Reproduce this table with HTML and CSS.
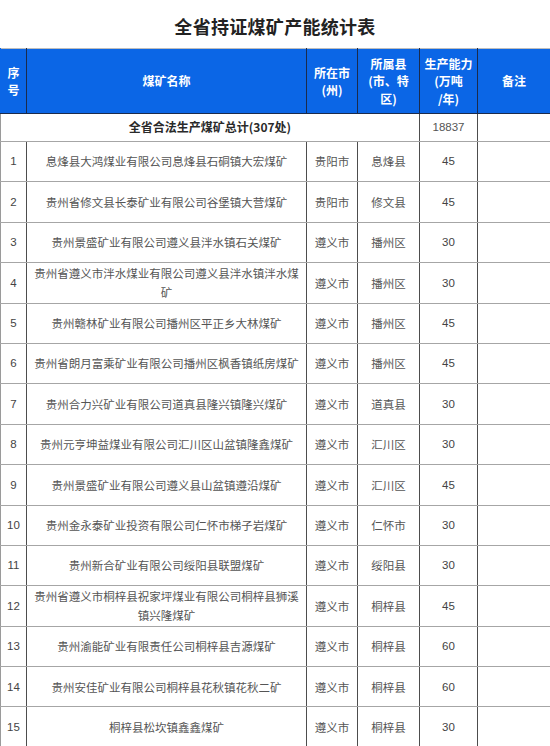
FILE: index.html
```html
<!DOCTYPE html>
<html lang="zh-CN">
<head>
<meta charset="utf-8">
<title>全省持证煤矿产能统计表</title>
<link rel="stylesheet" href="styles.css">
</head>
<body>
<h1 class="title">全省持证煤矿产能统计表</h1>
<table class="sheet">
<colgroup>
<col class="c-no"><col class="c-name"><col class="c-city"><col class="c-county"><col class="c-cap"><col class="c-note">
</colgroup>
<thead>
<tr class="head">
<th>序<br>号</th>
<th>煤矿名称</th>
<th>所在市<br>(州)</th>
<th>所属县<br>(市、特<br>区)</th>
<th>生产能力<br>(万吨<br>/年)</th>
<th>备注</th>
</tr>
</thead>
<tbody>
<tr class="total">
<td colspan="4" class="total-name">全省合法生产煤矿总计(307处)</td>
<td class="num">18837</td>
<td></td>
</tr>
<tr><td class="num">1</td><td class="name">息烽县大鸿煤业有限公司息烽县石硐镇大宏煤矿</td><td>贵阳市</td><td>息烽县</td><td class="num">45</td><td></td></tr>
<tr><td class="num">2</td><td class="name">贵州省修文县长泰矿业有限公司谷堡镇大营煤矿</td><td>贵阳市</td><td>修文县</td><td class="num">45</td><td></td></tr>
<tr><td class="num">3</td><td class="name">贵州景盛矿业有限公司遵义县泮水镇石关煤矿</td><td>遵义市</td><td>播州区</td><td class="num">30</td><td></td></tr>
<tr><td class="num">4</td><td class="name">贵州省遵义市泮水煤业有限公司遵义县泮水镇泮水煤矿</td><td>遵义市</td><td>播州区</td><td class="num">30</td><td></td></tr>
<tr><td class="num">5</td><td class="name">贵州赣林矿业有限公司播州区平正乡大林煤矿</td><td>遵义市</td><td>播州区</td><td class="num">45</td><td></td></tr>
<tr><td class="num">6</td><td class="name">贵州省朗月富乘矿业有限公司播州区枫香镇纸房煤矿</td><td>遵义市</td><td>播州区</td><td class="num">45</td><td></td></tr>
<tr><td class="num">7</td><td class="name">贵州合力兴矿业有限公司道真县隆兴镇隆兴煤矿</td><td>遵义市</td><td>道真县</td><td class="num">30</td><td></td></tr>
<tr><td class="num">8</td><td class="name">贵州元亨坤益煤业有限公司汇川区山盆镇隆鑫煤矿</td><td>遵义市</td><td>汇川区</td><td class="num">30</td><td></td></tr>
<tr><td class="num">9</td><td class="name">贵州景盛矿业有限公司遵义县山盆镇遵沿煤矿</td><td>遵义市</td><td>汇川区</td><td class="num">45</td><td></td></tr>
<tr><td class="num">10</td><td class="name">贵州金永泰矿业投资有限公司仁怀市梯子岩煤矿</td><td>遵义市</td><td>仁怀市</td><td class="num">30</td><td></td></tr>
<tr><td class="num">11</td><td class="name">贵州新合矿业有限公司绥阳县联盟煤矿</td><td>遵义市</td><td>绥阳县</td><td class="num">30</td><td></td></tr>
<tr><td class="num">12</td><td class="name">贵州省遵义市桐梓县祝家坪煤业有限公司桐梓县狮溪镇兴隆煤矿</td><td>遵义市</td><td>桐梓县</td><td class="num">45</td><td></td></tr>
<tr><td class="num">13</td><td class="name">贵州渝能矿业有限责任公司桐梓县吉源煤矿</td><td>遵义市</td><td>桐梓县</td><td class="num">60</td><td></td></tr>
<tr><td class="num">14</td><td class="name">贵州安佳矿业有限公司桐梓县花秋镇花秋二矿</td><td>遵义市</td><td>桐梓县</td><td class="num">60</td><td></td></tr>
<tr><td class="num">15</td><td class="name">桐梓县松坎镇鑫鑫煤矿</td><td>遵义市</td><td>桐梓县</td><td class="num">30</td><td></td></tr>
</tbody>
</table>
</body>
</html>
```
FILE: styles.css
```css
html, body {
  margin: 0;
  padding: 0;
  background: #ffffff;
}
body {
  width: 550px;
  font-family: "Noto Sans CJK SC", "Noto Sans", sans-serif;
}
.title {
  margin: 0;
  height: 48px;
  line-height: 52px;
  text-align: center;
  font-size: 18px;
  font-weight: 700;
  color: #222222;
  letter-spacing: 0.3px;
}
.sheet {
  width: 550px;
  border-collapse: collapse;
  table-layout: fixed;
  border-top: 1px solid #bdbdbd;
  border-right: 1px solid #9a9a9a;
}
.c-no { width: 26px; }
.c-name { width: 280px; }
.c-city { width: 51px; }
.c-county { width: 62px; }
.c-cap { width: 58px; }
.c-note { width: 73px; }

.head th {
  background: #0b66e6;
  color: #ffffff;
  font-weight: 700;
  font-size: 12px;
  line-height: 17.5px;
  height: 64px;
  padding: 0;
  text-align: center;
  vertical-align: middle;
  border-left: 1px solid #1b2b4c;
  border-bottom: 1px solid #1b2b4c;
}
.head th:first-child {
  border-left: 1px solid #0b66e6;
}
tbody td {
  height: 39.4px;
  padding: 0 3px;
  text-align: center;
  vertical-align: middle;
  font-size: 11.5px;
  line-height: 18.5px;
  color: #555555;
  border-left: 1px solid #4d4d4d;
  border-bottom: 1px solid #a6a6a6;
}
tbody td:first-child {
  border-left: 1px solid #9a9a9a;
}
tbody td.num {
  font-family: "Liberation Sans", "Noto Sans CJK SC", sans-serif;
  font-size: 11.5px;
  color: #444444;
  padding: 0;
}
.total td {
  height: 27px;
}
.total td.total-name {
  font-weight: 700;
  color: #2a2a2a;
  font-size: 12px;
}
.total td.num {
  color: #555555;
}
```
